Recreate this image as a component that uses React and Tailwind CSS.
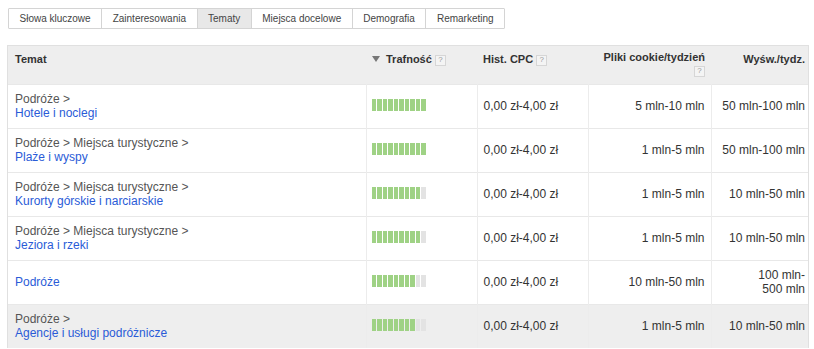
import React from 'react'

const tabs = ['Słowa kluczowe', 'Zainteresowania', 'Tematy', 'Miejsca docelowe', 'Demografia', 'Remarketing']

const rows = [
  { path: 'Podróże >', name: 'Hotele i noclegi', score: 10, cookies: '5 mln-10 mln', views: ['50 mln-100 mln'] },
  { path: 'Podróże > Miejsca turystyczne >', name: 'Plaże i wyspy', score: 10, cookies: '1 mln-5 mln', views: ['50 mln-100 mln'] },
  { path: 'Podróże > Miejsca turystyczne >', name: 'Kurorty górskie i narciarskie', score: 9, cookies: '1 mln-5 mln', views: ['10 mln-50 mln'] },
  { path: 'Podróże > Miejsca turystyczne >', name: 'Jeziora i rzeki', score: 9, cookies: '1 mln-5 mln', views: ['10 mln-50 mln'] },
  { path: null, name: 'Podróże', score: 8, cookies: '10 mln-50 mln', views: ['100 mln-', '500 mln'] },
  { path: 'Podróże >', name: 'Agencje i usługi podróżnicze', score: 8, cookies: '1 mln-5 mln', views: ['10 mln-50 mln'], hover: true },
]

function Help() {
  return (
    <span className="inline-flex items-center justify-center w-[11px] h-[11px] border border-[#d6d6d6] bg-[#f4f4f4] text-[8px] leading-none text-[#999] font-normal align-middle">
      ?
    </span>
  )
}

function Bar({ score }) {
  return (
    <div className="flex gap-[1px]">
      {Array.from({ length: 10 }).map((_, i) => (
        <div
          key={i}
          className={`w-[4.5px] h-[12px] ${i < score ? 'bg-[#9fd285]' : 'bg-[#e3e3e3]'}`}
        />
      ))}
    </div>
  )
}

export default function App() {
  return (
    <div className="w-[814px] h-[349px] bg-white overflow-hidden" style={{ fontFamily: '"Liberation Sans", Arial, sans-serif' }}>
      {/* Tabs */}
      <div className="flex pt-[8px] pl-[8px]">
        <div className="flex border border-[#d4d4d4] rounded-[1px]">
          {tabs.map((t, i) => (
            <div
              key={t}
              className={`h-[19px] px-[10.5px] flex items-center text-[10px] text-[#444] ${i > 0 ? 'border-l border-[#d4d4d4]' : ''} ${t === 'Tematy' ? 'bg-[#e8e8e8]' : 'bg-white'}`}
            >
              {t}
            </div>
          ))}
        </div>
      </div>

      {/* Table */}
      <div className="mt-[16px] ml-[7px] w-[802px] border-l border-t border-r border-[#e0e0e0]">
        <table className="border-collapse table-fixed w-[800px]">
          <colgroup>
            <col className="w-[358px]" />
            <col className="w-[111px]" />
            <col className="w-[111px]" />
            <col className="w-[123px]" />
            <col className="w-[97px]" />
          </colgroup>
          <thead>
            <tr className="bg-[#eeeeee] h-[38px] text-[11px] font-bold text-[#333] align-top">
              <th className="text-left px-[7px] pt-[5px]">Temat</th>
              <th className="text-left pl-[6px] pt-[5px]">
                <span className="inline-block w-0 h-0 border-l-[4px] border-r-[4px] border-t-[6px] border-l-transparent border-r-transparent border-t-[#777] mr-[6px] align-[1px]" />
                Trafność <Help />
              </th>
              <th className="text-left pl-[6px] pt-[5px]">
                Hist. CPC <Help />
              </th>
              <th className="text-right pr-[6px] pt-[5px] leading-[13px]">
                Pliki cookie/tydzień
                <div className="leading-none mt-[1px]"><Help /></div>
              </th>
              <th className="text-right pr-[3px] pt-[5px] whitespace-nowrap">Wyśw./tydz.</th>
            </tr>
          </thead>
          <tbody className="text-[12px]">
            {rows.map((r) => (
              <tr
                key={r.name}
                className={`h-[44px] border-t border-[#e8e8e8] ${r.hover ? 'bg-[#eeeeee]' : 'bg-white'}`}
              >
                <td className="px-[7px] leading-[14px] align-middle">
                  {r.path && <div className="text-[#555]">{r.path}</div>}
                  <div className="text-[#2a5bd7]">{r.name}</div>
                </td>
                <td className="pl-[5px] border-l border-[#ececec] align-middle">
                  <div className="-mt-[3px]"><Bar score={r.score} /></div>
                </td>
                <td className="pl-[6px] border-l border-[#ececec] text-[#333] align-middle">0,00 zł-4,00 zł</td>
                <td className="pr-[6px] border-l border-[#ececec] text-right text-[#333] align-middle">{r.cookies}</td>
                <td className="pr-[3px] border-l border-[#ececec] text-right text-[#333] leading-[14px] align-middle whitespace-nowrap">
                  {r.views.map((v) => (
                    <div key={v}>{v}</div>
                  ))}
                </td>
              </tr>
            ))}
          </tbody>
        </table>
      </div>
    </div>
  )
}
